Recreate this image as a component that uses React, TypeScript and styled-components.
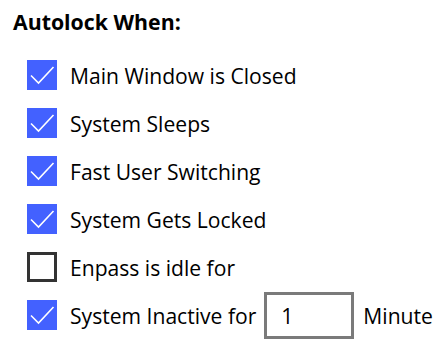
import React from "react";
import styled, { createGlobalStyle } from "styled-components";

const GlobalStyle = createGlobalStyle`
  html, body {
    margin: 0;
    padding: 0;
    background: #ffffff;
  }
  body {
    font-family: "Open Sans", "Noto Sans", "Liberation Sans", sans-serif;
    color: #000000;
  }
`;

const Panel = styled.div`
  width: 439px;
  height: 348px;
  box-sizing: border-box;
  padding: 8px 0 0 13px;
`;

const Title = styled.h3`
  margin: 0;
  font-size: 21.3px;
  line-height: 28px;
  font-weight: 700;
`;

const OptionList = styled.div`
  display: flex;
  flex-direction: column;
  margin-top: 15px;
  padding-left: 14px;
`;

const Row = styled.label`
  display: flex;
  align-items: center;
  height: 48px;
  gap: 13px;
  font-size: 21.1px;
`;

const Box = styled.span<{ $checked: boolean }>`
  flex: none;
  width: 30px;
  height: 30px;
  box-sizing: border-box;
  display: flex;
  align-items: center;
  justify-content: center;
  background: ${(p) => (p.$checked ? "#4361ff" : "#ffffff")};
  border: ${(p) => (p.$checked ? "none" : "3px solid #333333")};
`;

const Label = styled.span`
  white-space: nowrap;
`;

const MinutesInput = styled.input`
  flex: none;
  width: 90px;
  height: 47px;
  box-sizing: border-box;
  margin: 0 -4px 0 -5px;
  border: 3px solid #7a7a7a;
  padding: 0 0 0 14px;
  font-family: inherit;
  font-size: 21.1px;
  color: #000000;
  outline: none;
`;

function Check(props: { checked: boolean }): JSX.Element
{
  return (
    <Box $checked={props.checked}>
      {props.checked ? (
        <svg width="30" height="30" viewBox="0 0 30 30">
          <path d="M4 15.5 L11.5 23 L26.5 7" fill="none" stroke="#ffffff" strokeWidth="1.6" />
        </svg>
      ) : null}
    </Box>
  );
}

const options = [
  { label: "Main Window is Closed", checked: true },
  { label: "System Sleeps", checked: true },
  { label: "Fast User Switching", checked: true },
  { label: "System Gets Locked", checked: true },
  { label: "Enpass is idle for", checked: false },
];

export default function App(): JSX.Element
{
  return (
    <>
      <GlobalStyle />
      <Panel>
        <Title>Autolock When:</Title>
        <OptionList>
          {options.map((o) => (
            <Row key={o.label}>
              <Check checked={o.checked} />
              <Label>{o.label}</Label>
            </Row>
          ))}
          <Row>
            <Check checked={true} />
            <Label>System Inactive for</Label>
            <MinutesInput defaultValue="1" />
            <Label>Minute</Label>
          </Row>
        </OptionList>
      </Panel>
    </>
  );
}
